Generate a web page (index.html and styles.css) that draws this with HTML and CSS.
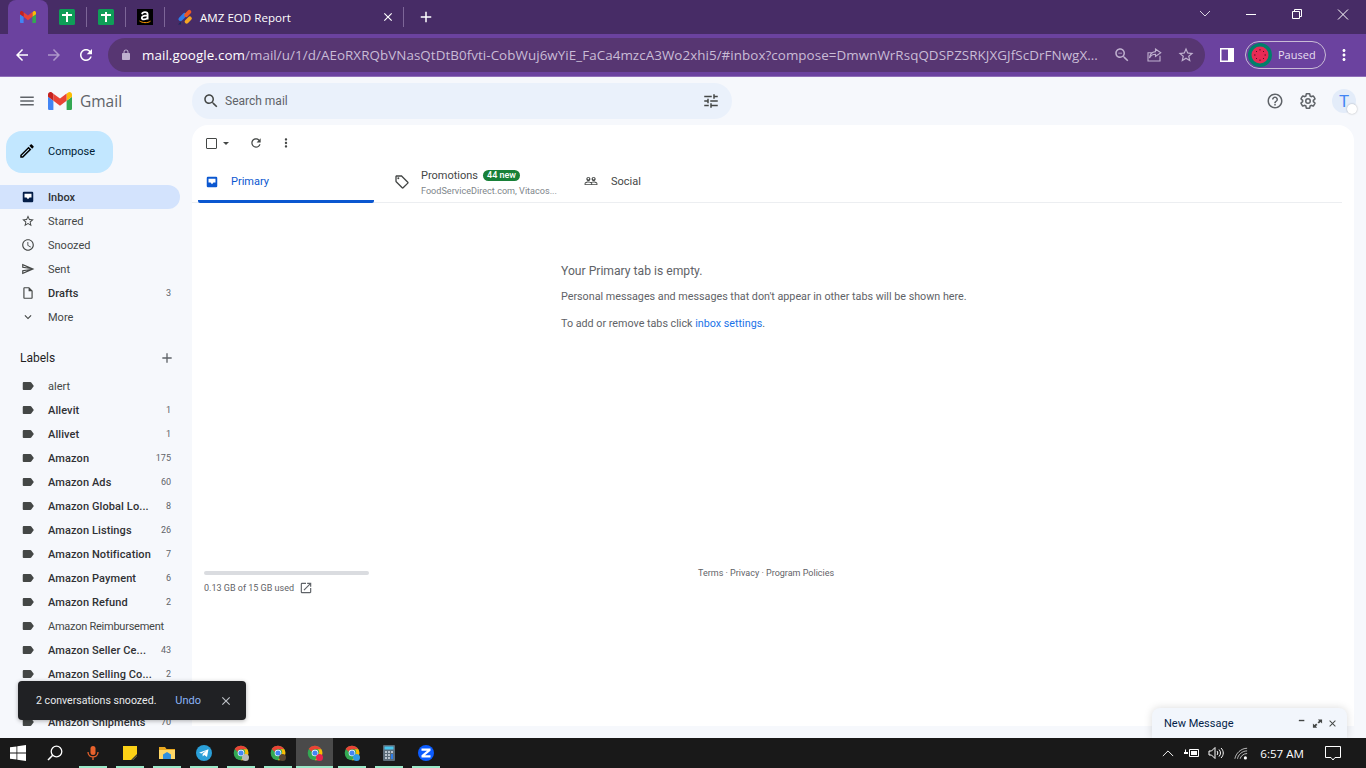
FILE: index.html
```html
<!DOCTYPE html>
<html>
<head>
    <title>Gmail - Inbox</title>
    <link rel="stylesheet" href="styles.css">
</head>
<body>
    <svg class="sprite">
        <symbol id="i-menu" viewBox="0 0 24 24"><path d="M3 18h18v-2H3v2zm0-5h18v-2H3v2zm0-7v2h18V6H3z"/></symbol>
        <symbol id="i-search" viewBox="0 0 24 24"><path d="M15.5 14h-.79l-.28-.27C15.41 12.59 16 11.11 16 9.5 16 5.91 13.09 3 9.5 3S3 5.91 3 9.5 5.91 16 9.5 16c1.61 0 3.09-.59 4.23-1.57l.27.28v.79l5 4.99L20.49 19l-4.99-5zm-6 0C7.01 14 5 11.99 5 9.5S7.01 5 9.5 5 14 7.01 14 9.5 11.99 14 9.5 14z"/></symbol>
        <symbol id="i-tune" viewBox="0 0 24 24"><path d="M3 17v2h6v-2H3zM3 5v2h10V5H3zm10 16v-2h8v-2h-8v-2h-2v6h2zM7 9v2H3v2h4v2h2V9H7zm14 4v-2H11v2h10zm-6-4h2V7h4V5h-4V3h-2v6z"/></symbol>
        <symbol id="i-help" viewBox="0 0 24 24"><path d="M11 18h2v-2h-2v2zm1-16C6.48 2 2 6.48 2 12s4.48 10 10 10 10-4.48 10-10S17.52 2 12 2zm0 18c-4.41 0-8-3.59-8-8s3.59-8 8-8 8 3.59 8 8-3.59 8-8 8zm0-14c-2.21 0-4 1.79-4 4h2c0-1.1.9-2 2-2s2 .9 2 2c0 2-3 1.75-3 5h2c0-2.25 3-2.5 3-5 0-2.21-1.79-4-4-4z"/></symbol>
        <symbol id="i-gear" viewBox="0 0 24 24"><path fill="none" stroke="currentColor" stroke-width="2" d="M19.14 12.94c.04-.3.06-.61.06-.94 0-.32-.02-.64-.07-.94l2.03-1.58c.18-.14.23-.41.12-.61l-1.92-3.32c-.12-.22-.37-.29-.59-.22l-2.39.96c-.5-.38-1.03-.7-1.62-.94l-.36-2.54c-.04-.24-.24-.41-.48-.41h-3.84c-.24 0-.43.17-.47.41l-.36 2.54c-.59.24-1.13.57-1.62.94l-2.39-.96c-.22-.08-.47 0-.59.22L2.74 8.87c-.12.21-.08.47.12.61l2.03 1.58c-.05.3-.09.63-.09.94s.02.64.07.94l-2.03 1.58c-.18.14-.23.41-.12.61l1.92 3.32c.12.22.37.29.59.22l2.39-.96c.5.38 1.03.7 1.62.94l.36 2.54c.05.24.24.41.48.41h3.84c.24 0 .44-.17.47-.41l.36-2.54c.59-.24 1.13-.56 1.62-.94l2.39.96c.22.08.47 0 .59-.22l1.92-3.32c.12-.22.07-.47-.12-.61l-2.01-1.58z"/><circle cx="12" cy="12" r="3" fill="none" stroke="currentColor" stroke-width="2"/></symbol>
        <symbol id="i-edit" viewBox="0 0 24 24"><path d="M14.06 9.02l.92.92L5.92 19H5v-.92l9.06-9.06M17.66 3c-.25 0-.51.1-.7.29l-1.83 1.83 3.75 3.75 1.83-1.83c.39-.39.39-1.02 0-1.41l-2.34-2.34c-.2-.2-.45-.29-.71-.29zm-3.6 3.19L3 17.25V21h3.75L17.81 9.94l-3.75-3.75z"/></symbol>
        <symbol id="i-inbox" viewBox="0 0 24 24"><rect x="3" y="3" width="18" height="18" rx="2"/><path fill="#fff" d="M6 6.5h12V13h-3.5L12 16l-2.500-3H6z"/></symbol>
        <symbol id="i-star" viewBox="0 0 24 24"><path d="M22 9.24l-7.19-.62L12 2 9.19 8.63 2 9.24l5.46 4.73L5.82 21 12 17.27 18.18 21l-1.63-7.03L22 9.24zM12 15.4l-3.76 2.27 1-4.28-3.32-2.88 4.38-.38L12 6.1l1.71 4.04 4.38.38-3.32 2.88 1 4.28L12 15.4z"/></symbol>
        <symbol id="i-clock" viewBox="0 0 24 24"><path d="M11.99 2C6.47 2 2 6.48 2 12s4.47 10 9.99 10C17.52 22 22 17.52 22 12S17.52 2 11.99 2zM12 20c-4.42 0-8-3.58-8-8s3.58-8 8-8 8 3.58 8 8-3.58 8-8 8zm.5-13H11v6l5.25 3.15.75-1.23-4.5-2.67z"/></symbol>
        <symbol id="i-send" viewBox="0 0 24 24"><path d="M4.01 6.03l7.51 3.22-7.52-1 .01-2.22m7.5 8.72L4 17.97v-2.22l7.51-1M2.01 3L2 10l15 2-15 2 .01 7L23 12 2.01 3z"/></symbol>
        <symbol id="i-draft" viewBox="0 0 24 24"><path d="M14 2H6c-1.1 0-1.99.9-1.99 2L4 20c0 1.1.89 2 1.99 2H18c1.1 0 2-.9 2-2V8l-6-6zM6 20V4h7v5h5v11H6z"/></symbol>
        <symbol id="i-down" viewBox="0 0 24 24"><path d="M16.59 8.59L12 13.17 7.41 8.59 6 10l6 6 6-6z"/></symbol>
        <symbol id="i-label" viewBox="0 0 24 24"><path d="M17.63 5.84C17.27 5.33 16.67 5 16 5L5 5.01C3.9 5.01 3 5.9 3 7v10c0 1.1.9 1.99 2 1.99L16 19c.67 0 1.27-.33 1.63-.84L22 12l-4.37-6.16z"/></symbol>
        <symbol id="i-add" viewBox="0 0 24 24"><path d="M19 13h-6v6h-2v-6H5v-2h6V5h2v6h6v2z"/></symbol>
        <symbol id="i-refresh" viewBox="0 0 24 24"><path d="M17.65 6.35C16.2 4.9 14.21 4 12 4c-4.42 0-7.99 3.58-7.99 8s3.57 8 7.99 8c3.73 0 6.84-2.55 7.73-6h-2.08c-.82 2.33-3.04 4-5.65 4-3.31 0-6-2.69-6-6s2.69-6 6-6c1.66 0 3.14.69 4.22 1.78L13 11h7V4l-2.35 2.35z"/></symbol>
        <symbol id="i-kebab" viewBox="0 0 24 24"><path d="M12 8c1.1 0 2-.9 2-2s-.9-2-2-2-2 .9-2 2 .9 2 2 2zm0 2c-1.1 0-2 .9-2 2s.9 2 2 2 2-.9 2-2-.9-2-2-2zm0 6c-1.1 0-2 .9-2 2s.9 2 2 2 2-.9 2-2-.9-2-2-2z"/></symbol>
        <symbol id="i-tag" viewBox="0 0 24 24"><path d="M21.41 11.58l-9-9C12.05 2.22 11.55 2 11 2H4c-1.1 0-2 .9-2 2v7c0 .55.22 1.05.59 1.42l9 9c.36.36.86.58 1.41.58s1.05-.22 1.41-.59l7-7c.37-.36.59-.86.59-1.41s-.23-1.06-.59-1.42zM13 20.01L4 11V4h7v-.01l9 9-7 7.02z"/><circle cx="6.5" cy="6.5" r="1.5"/></symbol>
        <symbol id="i-people" viewBox="0 0 24 24"><path d="M16.5 13c-1.2 0-3.07.34-4.5 1-1.43-.67-3.3-1-4.5-1C5.33 13 1 14.08 1 16.25V19h22v-2.75c0-2.17-4.33-3.25-6.5-3.25zm-4 4.5h-10v-1.25c0-.54 2.56-1.75 5-1.75s5 1.21 5 1.75v1.25zm9 0H14v-1.25c0-.46-.2-.86-.52-1.22.88-.3 1.96-.53 3.02-.53 2.44 0 5 1.21 5 1.75v1.25zM7.5 12c1.93 0 3.5-1.57 3.5-3.5S9.43 5 7.5 5 4 6.57 4 8.5 5.57 12 7.5 12zm0-5.5c.83 0 1.5.67 1.5 1.5s-.67 1.5-1.5 1.5S6 8.83 6 8 6.67 6.5 7.5 6.5zm9 5.5c1.93 0 3.5-1.57 3.5-3.5S18.43 5 16.5 5 13 6.57 13 8.5s1.57 3.5 3.5 3.5zm0-5.5c.83 0 1.5.67 1.5 1.5s-.67 1.5-1.5 1.5S15 8.83 15 8s.67-1.5 1.5-1.5z"/></symbol>
        <symbol id="i-close" viewBox="0 0 24 24"><path d="M19 6.41L17.59 5 12 10.59 6.41 5 5 6.41 10.59 12 5 17.59 6.41 19 12 13.41 17.59 19 19 17.59 13.41 12z"/></symbol>
        <symbol id="i-open" viewBox="0 0 24 24"><path d="M19 19H5V5h7V3H5a2 2 0 0 0-2 2v14a2 2 0 0 0 2 2h14c1.1 0 2-.9 2-2v-7h-2v7zM14 3v2h3.59l-9.83 9.83 1.41 1.41L19 6.41V10h2V3h-7z"/></symbol>
        <symbol id="i-gmail" viewBox="0 0 24 18"><path fill="#4285f4" d="M1.6 18h3.8V8.8L0 4.7v11.700C0 17.300.7 18 1.600 18z"/><path fill="#34a853" d="M18.600 18h3.800c.9 0 1.600-.7 1.600-1.600V4.700l-5.400 4.100z"/><path fill="#fbbc04" d="M18.600 1.700v7.100L24 4.700V2.500c0-2-2.300-3.200-3.900-1.900z"/><path fill="#ea4335" d="M5.400 8.800V1.700L12 6.600l6.600-5v7.200L12 13.700z"/><path fill="#c5221f" d="M0 2.500v2.200l5.400 4.100V1.700L3.900.6C2.300-.6 0 .5 0 2.500z"/></symbol>
        <symbol id="i-sheets" viewBox="0 0 16 16"><rect width="16" height="16" rx="1.500" fill="#0f9d58"/><path fill="#fff" d="M3 5h4V3h2v2h4v2H9v6H7V7H3z"/></symbol>
        <symbol id="i-chrome" viewBox="0 0 24 24"><circle cx="12" cy="12" r="11" fill="#34a853"/><path fill="#ea4335" d="M12 1a11 11 0 0 1 9.530 5.500H12a5.500 5.500 0 0 0-5.200 3.700L2.500 5.500A11 11 0 0 1 12 1z"/><path fill="#fbbc04" d="M21.530 6.500A11 11 0 0 1 12 23l4.800-8.300a5.500 5.500 0 0 0-.6-8.200z"/><circle cx="12" cy="12" r="5" fill="#fff"/><circle cx="12" cy="12" r="3.900" fill="#4285f4"/></symbol>
    </svg>

    <div class="tabstrip">
        <div class="tab tab-active">
            <svg class="fav gm"><use href="#i-gmail"/></svg>
        </div>
        <div class="tab"><svg class="fav"><use href="#i-sheets"/></svg></div>
        <div class="tab"><svg class="fav"><use href="#i-sheets"/></svg></div>
        <div class="tab">
            <svg class="fav" viewBox="0 0 16 16">
                <rect width="16" height="16" fill="#000"/>
                <path fill="none" stroke="#fff" stroke-width="1.800" d="M5 5.200c.3-1.500 1.500-2 3-2s2.600.7 2.600 2v5.300M10.600 6.400C7 6.600 4.800 7.200 4.800 9c0 2 3.900 2 5.800-.3"/>
                <path fill="none" stroke="#f90" stroke-width="1" d="M2.500 12c3 2 8 2.300 11 .2"/>
            </svg>
        </div>
        <div class="tab tab-open">
            <svg class="fav" viewBox="0 0 16 16">
                <rect x="0.500" y="6" width="10" height="4.200" rx="2.100" transform="rotate(-45 5.500 8)" fill="#2e7de9"/>
                <rect x="6.500" y="2.500" width="8.500" height="4" rx="2" transform="rotate(-45 10.700 4.500)" fill="#ee5a24"/>
                <rect x="7" y="9" width="8.500" height="4" rx="2" transform="rotate(-45 11.200 11)" fill="#f5a623"/>
                <path d="M1 15.500l3-3v3z" fill="#1b2a5c"/>
            </svg>
            <span class="tab-title">AMZ EOD Report</span>
            <svg class="tab-close"><use href="#i-close"/></svg>
        </div>
        <svg class="new-tab"><use href="#i-add"/></svg>
        <div class="win-controls">
            <svg class="win-btn" viewBox="0 0 46 20"><path d="M18 7l5 5 5-5" fill="none" stroke="#fff" stroke-width="0.800"/></svg>
            <svg class="win-btn" viewBox="0 0 46 20"><path d="M18 10.500h10" stroke="#fff"/></svg>
            <svg class="win-btn" viewBox="0 0 46 20"><path d="M18.500 7.500h7v7h-7zM20.500 7.500v-2h7v7h-2" fill="none" stroke="#fff"/></svg>
            <svg class="win-btn" viewBox="0 0 46 20"><path d="M18 5.500l10 10M28 5.500l-10 10" stroke="#fff"/></svg>
        </div>
    </div>

    <div class="browserbar">
        <svg class="nav-btn" viewBox="0 0 24 24"><path fill="#fff" d="M20 11H7.830l5.590-5.590L12 4l-8 8 8 8 1.410-1.410L7.830 13H20v-2z"/></svg>
        <svg class="nav-btn nav-off" viewBox="0 0 24 24"><path fill="#fff" d="M12 4l-1.410 1.410L16.170 11H4v2h12.170l-5.580 5.590L12 20l8-8z"/></svg>
        <svg class="nav-btn"><use class="white" href="#i-refresh"/></svg>
        <div class="omnibox">
            <svg class="lock" viewBox="0 0 24 24"><path d="M18 8h-1V6c0-2.760-2.240-5-5-5S7 3.240 7 6v2H6c-1.100 0-2 .9-2 2v10c0 1.100.9 2 2 2h12c1.100 0 2-.9 2-2V10c0-1.100-.9-2-2-2zM9 8V6c0-1.660 1.340-3 3-3s3 1.340 3 3v2H9z"/></svg>
            <div class="url"><b>mail.google.com</b>/mail/u/1/d/AEoRXRQbVNasQtDtB0fvti-CobWuj6wYiE_FaCa4mzcA3Wo2xhi5/#inbox?compose=DmwnWrRsqQDSPZSRKJXGJfScDrFNwgX...</div>
            <svg class="omni-icon" viewBox="0 0 24 24"><path d="M15.500 14h-.79l-.28-.27C15.410 12.590 16 11.110 16 9.500 16 5.910 13.090 3 9.500 3S3 5.910 3 9.500 5.910 16 9.500 16c1.610 0 3.090-.59 4.230-1.570l.27.28v.79l5 4.990L20.490 19l-4.990-5zm-6 0C7.010 14 5 11.990 5 9.500S7.010 5 9.500 5 14 7.010 14 9.500 11.990 14 9.500 14zM7 9h5v1H7z"/></svg>
            <svg class="omni-icon" viewBox="0 0 24 24"><path fill="none" stroke="currentColor" stroke-width="1.500" d="M20 13v7H4V9h5M14 4l7 5-7 5v-3c-4 0-6 1-8 5 .5-5 3-8 8-8.500z"/></svg>
            <svg class="omni-icon"><use href="#i-star"/></svg>
        </div>
        <svg class="side-panel" viewBox="0 0 14 14"><path fill="#fff" fill-rule="evenodd" d="M0 0h14v14H0zM1.500 1.500v11H8v-11z"/></svg>
        <div class="paused">
            <svg class="melon" viewBox="0 0 24 24">
                <circle cx="12" cy="12" r="12" fill="#00806a"/>
                <circle cx="12" cy="12" r="8.500" fill="#ea2a55"/>
                <path fill="#5a1024" d="M11.500 6h1v1.500h-1zM11.500 16.500h1V18h-1zM6 11.500h1.500v1H6zM16.500 11.500H18v1h-1.500zM8 8h1v1H8zM15 8h1v1h-1zM8 15h1v1H8zM15 15h1v1h-1z"/>
            </svg>
            <span>Paused</span>
        </div>
        <svg class="nav-btn chrome-menu"><use class="white" href="#i-kebab"/></svg>
    </div>

    <div class="app">
        <div class="app-header">
            <div class="brand">
                <svg class="ic-18 grey"><use href="#i-menu"/></svg>
                <svg class="gmail-logo"><use href="#i-gmail"/></svg>
                <span class="gmail-word">Gmail</span>
            </div>
            <div class="searchbar">
                <svg class="ic-18 dark"><use href="#i-search"/></svg>
                <span class="search-text">Search mail</span>
                <svg class="ic-18 dark"><use href="#i-tune"/></svg>
            </div>
            <div class="header-right">
                <svg class="ic-18 grey"><use href="#i-help"/></svg>
                <svg class="ic-18 grey"><use href="#i-gear"/></svg>
                <div class="avatar">T<span class="avatar-badge"></span></div>
            </div>
        </div>

        <div class="app-body">
            <div class="sidebar">
                <div class="compose">
                    <svg class="ic-18 ink"><use href="#i-edit"/></svg>
                    <span>Compose</span>
                </div>
                <div class="nav">
                    <div class="row row-active"><svg class="ic-14"><use href="#i-inbox"/></svg><span class="name">Inbox</span></div>
                    <div class="row"><svg class="ic-14"><use href="#i-star"/></svg><span class="name">Starred</span></div>
                    <div class="row"><svg class="ic-14"><use href="#i-clock"/></svg><span class="name">Snoozed</span></div>
                    <div class="row"><svg class="ic-14"><use href="#i-send"/></svg><span class="name">Sent</span></div>
                    <div class="row unread"><svg class="ic-14"><use href="#i-draft"/></svg><span class="name">Drafts</span><span class="count">3</span></div>
                    <div class="row"><svg class="ic-14"><use href="#i-down"/></svg><span class="name">More</span></div>
                </div>
                <div class="labels-head">
                    <span>Labels</span>
                    <svg class="ic-16"><use href="#i-add"/></svg>
                </div>
                <div class="nav">
                    <div class="row"><svg class="ic-14"><use href="#i-label"/></svg><span class="name">alert</span></div>
                    <div class="row unread"><svg class="ic-14"><use href="#i-label"/></svg><span class="name">Allevit</span><span class="count">1</span></div>
                    <div class="row unread"><svg class="ic-14"><use href="#i-label"/></svg><span class="name">Allivet</span><span class="count">1</span></div>
                    <div class="row unread"><svg class="ic-14"><use href="#i-label"/></svg><span class="name">Amazon</span><span class="count">175</span></div>
                    <div class="row unread"><svg class="ic-14"><use href="#i-label"/></svg><span class="name">Amazon Ads</span><span class="count">60</span></div>
                    <div class="row unread"><svg class="ic-14"><use href="#i-label"/></svg><span class="name">Amazon Global Lo...</span><span class="count">8</span></div>
                    <div class="row unread"><svg class="ic-14"><use href="#i-label"/></svg><span class="name">Amazon Listings</span><span class="count">26</span></div>
                    <div class="row unread"><svg class="ic-14"><use href="#i-label"/></svg><span class="name">Amazon Notification</span><span class="count">7</span></div>
                    <div class="row unread"><svg class="ic-14"><use href="#i-label"/></svg><span class="name">Amazon Payment</span><span class="count">6</span></div>
                    <div class="row unread"><svg class="ic-14"><use href="#i-label"/></svg><span class="name">Amazon Refund</span><span class="count">2</span></div>
                    <div class="row"><svg class="ic-14"><use href="#i-label"/></svg><span class="name tight">Amazon Reimbursement</span></div>
                    <div class="row unread"><svg class="ic-14"><use href="#i-label"/></svg><span class="name">Amazon Seller Ce...</span><span class="count">43</span></div>
                    <div class="row unread"><svg class="ic-14"><use href="#i-label"/></svg><span class="name">Amazon Selling Co...</span><span class="count">2</span></div>
                    <div class="row"></div>
                    <div class="row unread"><svg class="ic-14"><use href="#i-label"/></svg><span class="name">Amazon Shipments</span><span class="count">70</span></div>
                </div>
            </div>

            <div class="mailpanel">
                <div class="mail-tools">
                    <span class="checkbox"></span>
                    <span class="caret"></span>
                    <svg class="ic-14 tool-refresh"><use href="#i-refresh"/></svg>
                    <svg class="ic-14 tool-more"><use href="#i-kebab"/></svg>
                </div>
                <div class="mail-tabs">
                    <div class="mtab mtab-active">
                        <svg class="ic-14 blue"><use href="#i-inbox"/></svg>
                        <span>Primary</span>
                    </div>
                    <div class="mtab mtab-promo">
                        <svg class="ic-16"><use href="#i-tag"/></svg>
                        <div class="promo-text">
                            <div class="promo-top">Promotions <span class="new-badge">44 new</span></div>
                            <div class="promo-sub">FoodServiceDirect.com, Vitacos...</div>
                        </div>
                    </div>
                    <div class="mtab mtab-social">
                        <svg class="ic-14"><use href="#i-people"/></svg>
                        <span>Social</span>
                    </div>
                </div>
                <div class="empty">
                    <p class="empty-title">Your Primary tab is empty.</p>
                    <p>Personal messages and messages that don't appear in other tabs will be shown here.</p>
                    <p>To add or remove tabs click <a>inbox settings</a>.</p>
                </div>
                <div class="mail-foot">
                    <div class="storage">
                        <div class="storage-bar"></div>
                        <div class="storage-text">0.13 GB of 15 GB used <svg class="ic-14"><use href="#i-open"/></svg></div>
                    </div>
                    <div class="policies">Terms · Privacy · Program Policies</div>
                </div>
            </div>
        </div>

        <div class="toast">
            <span>2 conversations snoozed.</span>
            <a>Undo</a>
            <svg class="ic-14"><use href="#i-close"/></svg>
        </div>
        <div class="compose-min">
            <span>New Message</span>
            <div class="compose-min-btns">
                <svg viewBox="0 0 12 12"><path d="M2 2h6v1.500H2z"/></svg>
                <svg viewBox="0 0 12 12"><path d="M6.500 1.500H11V6L9.300 4.300 7.500 6 6 4.500l1.800-1.300zM5.500 10.500H1V6l1.700 1.700L4.500 6 6 7.500 4.200 8.800z"/></svg>
                <svg viewBox="0 0 24 24"><use href="#i-close"/></svg>
            </div>
        </div>
    </div>

    <div class="taskbar">
        <div class="task task-start">
            <svg viewBox="0 0 16 16"><path fill="#fff" d="M0 2.300l6.500-.9v6.200H0zM7.300 1.300L16 0v7.600H7.300zM0 8.400h6.500v6.200L0 13.700zM7.300 8.400H16V16l-8.700-1.200z"/></svg>
        </div>
        <div class="task task-search">
            <svg viewBox="0 0 16 16"><circle cx="9.500" cy="6.500" r="5.300" fill="none" stroke="#fff" stroke-width="1.300"/><path d="M5.700 10.300L1 15" stroke="#fff" stroke-width="1.600"/></svg>
        </div>
        <div class="task on">
            <svg viewBox="0 0 16 16"><rect x="5.500" y="1" width="5" height="9" rx="2.500" fill="#e8622c"/><path d="M3 7c0 6.500 10 6.500 10 0M8 12v3" fill="none" stroke="#e8622c" stroke-width="1.300"/></svg>
        </div>
        <div class="task on">
            <svg viewBox="0 0 16 16"><path fill="#fcd116" d="M1 1h14v10l-4 4H1z"/><path fill="#3a3a3a" d="M9 15l6-6v2l-4 4z"/></svg>
        </div>
        <div class="task on">
            <svg viewBox="0 0 16 16"><path fill="#e9a820" d="M0 2h6l1.500 2H16v10H0z"/><path fill="#ffd767" d="M0 5h16v9H0z"/><path fill="#2f8fe0" d="M8 7l4 2.500v4.500H4V9.500z"/></svg>
        </div>
        <div class="task on">
            <svg viewBox="0 0 16 16"><circle cx="8" cy="8" r="8" fill="#2a9fd8"/><path fill="#fff" d="M3 7.800l9.500-3.600-1.500 7.800-2.800-2-1.400 1.400-.3-2.300 4-3.500-5 3z"/></svg>
        </div>
        <div class="task on"><svg><use href="#i-chrome"/></svg><i class="badge b-grey"></i></div>
        <div class="task on"><svg><use href="#i-chrome"/></svg><i class="badge b-dark"></i></div>
        <div class="task on task-current"><svg><use href="#i-chrome"/></svg><i class="badge b-red"></i></div>
        <div class="task on"><svg><use href="#i-chrome"/></svg><i class="badge b-blue"></i></div>
        <div class="task on">
            <svg viewBox="0 0 16 16"><rect x="2" width="12" height="16" rx="1" fill="#5b6b78"/><rect x="3.500" y="1.500" width="9" height="3" fill="#48c6ef"/><path fill="#b8c2cc" d="M4 6h2v2H4zM7 6h2v2H7zM10 6h2v2h-2zM4 9h2v2H4zM7 9h2v2H7zM4 12h2v2H4zM7 12h2v2H7z"/><path fill="#2e7de9" d="M10 9h2v5h-2z"/></svg>
        </div>
        <div class="task on">
            <svg viewBox="0 0 16 16"><circle cx="8" cy="8" r="8" fill="#0b5cff"/><path fill="#fff" d="M3.500 3.500h9v2.200L7 10.300h5.500v2.200h-9v-2.200L9 5.700H3.500z"/></svg>
        </div>
        <div class="tray">
            <svg class="tray-up" viewBox="0 0 14 8"><path d="M1 7l6-6 6 6" fill="none" stroke="#fff" stroke-width="1.100"/></svg>
            <svg class="tray-batt" viewBox="0 0 16 10"><path fill="none" stroke="#fff" d="M5.500 1.500h9v7h-9z"/><path fill="#fff" d="M7 3h6v4H7zM0 4h4v2H0zM1 1.500h1V4H1z"/></svg>
            <svg class="tray-sound" viewBox="0 0 16 14"><path fill="none" stroke="#fff" d="M1 5h2.500L7 1.500v11L3.500 9H1zM9 5c1 1 1 3 0 4M11 3.500c2 2 2 5 0 7M13 2c3 3 3 7 0 10"/></svg>
            <svg class="tray-wifi" viewBox="0 0 16 14"><path fill="none" stroke="#fff" stroke-width="0.800" d="M1 13C2 7 8 1 15 1M4 13c.5-4 5-9 11-9M7 13c.5-2.500 3.500-6 8-6"/><circle cx="13" cy="12" r="1.800" fill="#fff"/></svg>
            <span class="clock">6:57 AM</span>
            <svg class="tray-note" viewBox="0 0 16 16"><path fill="none" stroke="#fff" d="M.5 1.500h15v11H10L8 15l-2-2.500H.5z"/></svg>
        </div>
    </div>
</body>
</html>
```
FILE: styles.css
```css
* {
    box-sizing: border-box;
    margin: 0;
    padding: 0;
}

body {
    width: 1366px;
    height: 768px;
    overflow: hidden;
    display: flex;
    flex-direction: column;
    font-family: Roboto, "Liberation Sans", sans-serif;
    background-color: #f6f8fc;
    color: #444746;
}

svg {
    display: block;
    flex-shrink: 0;
    fill: currentColor;
}

.sprite {
    display: none;
}

.white {
    color: #fff;
}

/* icon sizes */
.ic-14 { width: 14px; height: 14px; }
.ic-16 { width: 16px; height: 16px; }
.ic-18 { width: 18px; height: 18px; }
.grey { color: #5f6368; }
.dark { color: #444746; }
.ink { color: #000; }
.blue { color: #0b57d0; }

/* browser chrome */
.tabstrip {
    height: 34px;
    display: flex;
    align-items: center;
    padding-left: 8px;
    background-color: #472c66;
    flex-shrink: 0;
}

.tab {
    width: 39px;
    height: 34px;
    display: flex;
    align-items: center;
    padding-left: 11px;
    background-image: linear-gradient(#7d6698, #7d6698);
    background-size: 1px 20px;
    background-repeat: no-repeat;
    background-position: right center;
}

.tab-active {
    width: 40px;
    padding-left: 12px;
    background-color: #6b429f;
    background-image: none;
    border-radius: 8px 8px 0 0;
}

.fav {
    width: 16px;
    height: 16px;
}

.gm {
    height: 12px;
}

.tab-open {
    width: 239px;
    padding-left: 12px;
}

.tab-title {
    margin-left: 7px;
    flex-grow: 1;
    font-family: "Open Sans", sans-serif;
    font-size: 11.6px;
    color: #fff;
    white-space: nowrap;
}

.tab-close {
    width: 14px;
    height: 14px;
    margin-right: 9px;
    color: #fff;
}

.new-tab {
    width: 18px;
    height: 18px;
    margin-left: 13px;
    color: #fff;
}

.win-controls {
    margin-left: auto;
    margin-bottom: 6px;
    display: flex;
}

.win-btn {
    width: 46px;
    height: 20px;
}

.browserbar {
    height: 43px;
    display: flex;
    align-items: center;
    background-color: #6b429f;
    border-bottom: 1px solid #8f6fb8;
    flex-shrink: 0;
    padding-left: 13px;
    padding-bottom: 1px;
}

.nav-btn {
    width: 18px;
    height: 18px;
    margin-right: 14px;
}

.nav-off {
    opacity: 0.45;
}

.omnibox {
    width: 1097px;
    height: 34px;
    margin-left: -1px;
    border-radius: 17px;
    background-color: #573672;
    display: flex;
    align-items: center;
    padding-left: 12px;
    color: #bfb0cf;
}

.lock {
    width: 12px;
    height: 12px;
    margin-right: 10px;
}

.url {
    width: 957px;
    font-family: "Open Sans", sans-serif;
    font-size: 13.4px;
    letter-spacing: 0.06px;
    white-space: nowrap;
    color: #c9bcd6;
}

.url b {
    font-weight: 400;
    color: #fff;
}

.omni-icon {
    width: 18px;
    height: 18px;
    margin-left: 14px;
}

.side-panel {
    width: 14px;
    height: 14px;
    margin-left: 15px;
}

.paused {
    width: 81px;
    height: 28px;
    margin-left: 11px;
    border: 1px solid #c9bcd6;
    border-radius: 14px;
    display: flex;
    align-items: center;
    padding-left: 2px;
    font-family: "Open Sans", sans-serif;
    font-size: 11px;
    color: #e6dff0;
}

.melon {
    width: 24px;
    height: 24px;
    margin-right: 6px;
}

.chrome-menu {
    margin: 0 0 0 9px;
}

/* gmail */
.app {
    flex-grow: 1;
    min-height: 0;
    display: flex;
    flex-direction: column;
    position: relative;
    overflow: hidden;
}

.app-header {
    height: 48px;
    display: flex;
    align-items: center;
    flex-shrink: 0;
}

.brand {
    width: 192px;
    display: flex;
    align-items: center;
    padding-left: 18px;
}

.gmail-logo {
    width: 24px;
    height: 18px;
    margin-left: 12px;
}

.gmail-word {
    margin-left: 8px;
    font-family: "Open Sans", sans-serif;
    font-size: 15.5px;
    color: #5f6368;
}

.searchbar {
    width: 540px;
    height: 36px;
    border-radius: 18px;
    background-color: #eaf1fb;
    display: flex;
    align-items: center;
    padding: 0 12px 0 10px;
}

.search-text {
    margin-left: 5px;
    flex-grow: 1;
    font-size: 12px;
    color: #5f6368;
}

.header-right {
    margin-left: auto;
    display: flex;
    align-items: center;
    gap: 15px;
    padding-right: 10px;
}

.avatar {
    width: 24px;
    height: 24px;
    border-radius: 50%;
    background-color: #e3ecf9;
    color: #4285f4;
    font-size: 17px;
    display: flex;
    align-items: center;
    justify-content: center;
    position: relative;
}

.avatar-badge {
    position: absolute;
    right: -1px;
    bottom: -1px;
    width: 10px;
    height: 10px;
    border-radius: 50%;
    background-color: #fff;
    box-shadow: 0 0 2px rgba(0, 0, 0, 0.3);
}

.app-body {
    flex-grow: 1;
    min-height: 0;
    display: flex;
}

.sidebar {
    width: 192px;
    flex-shrink: 0;
    overflow: hidden;
    font-size: 11px;
}

.compose {
    width: 107px;
    height: 42px;
    margin: 6px 0 12px 6px;
    background-color: #c2e7ff;
    border-radius: 16px;
    display: flex;
    align-items: center;
    padding: 0 0 2px 12px;
    gap: 12px;
    font-weight: 450;
    color: #001d35;
}

.row {
    width: 180px;
    height: 24px;
    display: flex;
    align-items: center;
    padding: 0 9px 0 21px;
    border-radius: 0 12px 12px 0;
}

.row .name {
    margin-left: 13px;
    flex-grow: 1;
    white-space: nowrap;
}

.row .tight {
    letter-spacing: -0.25px;
}

.count {
    font-size: 9px;
    color: #5f6368;
}

.unread {
    font-weight: 500;
    color: #303134;
    letter-spacing: 0.1px;
}

.unread .count {
    font-weight: 400;
    letter-spacing: 0;
}

.unread svg {
    color: #444746;
}

.row-active {
    background-color: #d3e3fd;
    font-weight: 500;
    color: #303134;
}

.row-active svg {
    color: #041e49;
}

.labels-head {
    width: 180px;
    height: 28px;
    margin-top: 15px;
    margin-bottom: 2px;
    display: flex;
    align-items: center;
    justify-content: space-between;
    padding: 0 5px 0 20px;
    font-size: 12px;
    color: #1f1f1f;
}

.labels-head svg {
    color: #5f6368;
}

.mailpanel {
    width: 1162px;
    height: 601px;
    background-color: #fff;
    border-radius: 16px 16px 0 0;
    display: flex;
    flex-direction: column;
}

.mail-tools {
    height: 36px;
    display: flex;
    align-items: center;
    padding-left: 14px;
    color: #444746;
}

.checkbox {
    width: 11px;
    height: 11px;
    border: 1.500px solid #444746;
    border-radius: 1px;
}

.caret {
    width: 0;
    height: 0;
    margin-left: 6px;
    border-left: 3.500px solid transparent;
    border-right: 3.500px solid transparent;
    border-top: 3.500px solid #444746;
}

.tool-refresh {
    margin-left: 20px;
}

.tool-more {
    margin-left: 16px;
}

.mail-tabs {
    width: 1150px;
    height: 42px;
    display: flex;
    border-bottom: 1px solid #eceef1;
    font-size: 11px;
}

.mtab {
    height: 42px;
    display: flex;
    align-items: center;
}

.mtab-active {
    width: 176px;
    margin-left: 6px;
    padding: 2px 0 0 7px;
    gap: 12px;
    color: #0b57d0;
    font-weight: 450;
    border-bottom: 3px solid #0b57d0;
    border-radius: 0 0 2px 2px;
}

.mtab-promo {
    width: 192px;
    padding-left: 20px;
    gap: 11px;
}

.promo-top {
    display: flex;
    align-items: center;
    gap: 5px;
}

.new-badge {
    padding: 0 4px;
    height: 11px;
    line-height: 11px;
    font-size: 9px;
    font-weight: 500;
    border-radius: 6px;
    background-color: #188038;
    color: #fff;
}

.promo-sub {
    margin-top: 4px;
    font-size: 9.1px;
    color: #80868b;
    white-space: nowrap;
}

.mtab-social {
    padding: 0 0 2px 18px;
    gap: 13px;
}

.empty {
    margin: 61px 0 0 369px;
    font-size: 10.75px;
    color: #5f6368;
}

.empty p {
    margin-top: 14px;
    line-height: 13px;
}

.empty .empty-title {
    margin-top: 0;
    font-size: 12.15px;
    line-height: 14px;
}

.empty .empty-title + p {
    margin-top: 12px;
}

.empty a {
    color: #1a73e8;
}

.mail-foot {
    margin-top: auto;
    margin-bottom: 131px;
    display: flex;
    align-items: flex-start;
    padding-left: 12px;
    font-size: 9px;
    color: #5f6368;
}

.storage {
    width: 165px;
    margin-top: 3px;
}

.storage-bar {
    height: 4px;
    border-radius: 2px;
    background-color: #dadce0;
}

.storage-text {
    display: flex;
    align-items: center;
    gap: 5px;
    margin-top: 6px;
}

.policies {
    margin-left: 329px;
}

.toast {
    position: absolute;
    left: 18px;
    top: 604px;
    width: 228px;
    height: 39px;
    background-color: #202124;
    border-radius: 4px;
    box-shadow: 0 1px 4px rgba(0, 0, 0, 0.3);
    display: flex;
    align-items: center;
    padding: 0 13px 0 18px;
    font-size: 10.6px;
    color: #e8eaed;
}

.toast span {
    flex-grow: 1;
}

.toast a {
    color: #8ab4f8;
    font-size: 11px;
    margin-right: 18px;
}

.toast svg {
    color: #bdc1c6;
}

.compose-min {
    position: absolute;
    left: 1152px;
    top: 631px;
    width: 195px;
    height: 30px;
    background-color: #f2f6fc;
    border-radius: 8px 8px 0 0;
    box-shadow: 0 0 8px rgba(0, 0, 0, 0.15);
    display: flex;
    align-items: center;
    justify-content: space-between;
    padding: 0 9px 0 12px;
    font-size: 11px;
    font-weight: 450;
    color: #041e49;
}

.compose-min-btns {
    display: flex;
    gap: 4px;
    color: #444746;
}

.compose-min-btns svg {
    width: 11px;
    height: 11px;
}

/* windows taskbar */
.taskbar {
    height: 30px;
    display: flex;
    background-color: #191919;
    flex-shrink: 0;
}

.task {
    width: 37px;
    height: 30px;
    display: flex;
    align-items: center;
    justify-content: center;
    position: relative;
    padding-bottom: 1px;
}

.task svg {
    width: 16px;
    height: 16px;
}

.task-start {
    width: 36px;
}

.task-search {
    margin-right: 1px;
}

.on::after {
    content: "";
    position: absolute;
    left: 5px;
    right: 4px;
    bottom: 0;
    height: 2px;
    background-color: #9be8c8;
}

.task-current {
    background-color: #4a4a4a;
}

.task-current::after {
    left: 0;
    right: 0;
}

.badge {
    position: absolute;
    left: 20px;
    top: 16px;
    width: 7px;
    height: 7px;
    border-radius: 50%;
}

.b-grey { background-color: #b8b8b8; }
.b-dark { background-color: #5a4632; }
.b-red { background-color: #e6244f; }
.b-blue { background-color: #2e9be6; }

.tray {
    margin-left: auto;
    display: flex;
    align-items: center;
    color: #fff;
    font-family: "Open Sans", sans-serif;
    font-size: 11.6px;
    padding-right: 25px;
}

.tray-up { width: 12px; height: 7px; }
.tray-batt { width: 16px; height: 10px; margin-left: 10px; }
.tray-sound { width: 16px; height: 14px; margin-left: 8px; }
.tray-wifi { width: 14px; height: 13px; margin-left: 10px; }

.clock {
    margin-left: 12px;
}

.tray-note {
    width: 16px;
    height: 16px;
    margin-left: 21px;
}
```
